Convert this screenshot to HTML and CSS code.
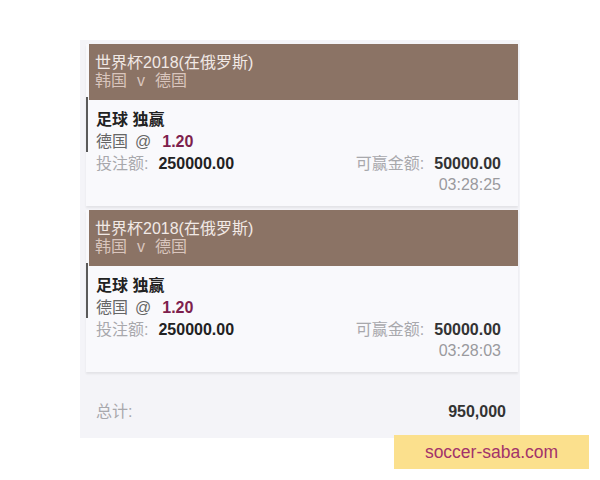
FILE: index.html
```html
<!DOCTYPE html>
<html lang="zh">
  <head>
    <meta charset="UTF-8" />
    <meta name="viewport" content="width=device-width, initial-scale=1.0" />
    <link rel="stylesheet" href="styles.css">
  </head>
  <body>
    <div class="slip">
      <div class="bet">
        <div class="bet-head">
          <div class="league">世界杯2018(在俄罗斯)</div>
          <div class="match">韩国<span class="vs">v</span>德国</div>
        </div>
        <div class="bet-body">
          <div class="market">足球 独赢</div>
          <div class="pick">德国<span class="at">@</span><span class="odds">1.20</span></div>
          <div class="amounts">
            <div><span class="label">投注额:</span><span class="value">250000.00</span></div>
            <div><span class="label">可赢金额:</span><span class="value">50000.00</span></div>
          </div>
          <div class="time">03:28:25</div>
        </div>
      </div>
      <div class="bet">
        <div class="bet-head">
          <div class="league">世界杯2018(在俄罗斯)</div>
          <div class="match">韩国<span class="vs">v</span>德国</div>
        </div>
        <div class="bet-body">
          <div class="market">足球 独赢</div>
          <div class="pick">德国<span class="at">@</span><span class="odds">1.20</span></div>
          <div class="amounts">
            <div><span class="label">投注额:</span><span class="value">250000.00</span></div>
            <div><span class="label">可赢金额:</span><span class="value">50000.00</span></div>
          </div>
          <div class="time">03:28:03</div>
        </div>
      </div>
      <div class="total">
        <span class="label">总计:</span>
        <span class="value">950,000</span>
      </div>
    </div>
    <div class="watermark">soccer-saba.com</div>
  </body>
</html>
```

FILE: styles.css
```css
body {
  margin: 0;
  background: #fff;
  font-family: "Liberation Sans", "Noto Sans CJK SC", sans-serif;
  font-size: 16px;
  color: #222;
}
.slip {
  margin: 40px 0 0 80px;
  width: 440px;
  height: 398px;
  box-sizing: border-box;
  padding: 4px 2px 0 6px;
  background: #f4f4f8;
}
.bet {
  height: 162px;
  margin-bottom: 4px;
  display: flex;
  flex-direction: column;
  background: #f9f9fc;
  box-shadow: 0 2px 2px rgba(0, 0, 0, 0.07);
}
.bet-head {
  margin-left: 3px;
  padding: 10px 6px;
  background: #8b7365;
  line-height: 18px;
}
.league {
  color: #f1e9e5;
}
.match {
  color: #d9c5bd;
}
.vs {
  margin: 0 10px;
}
.bet-body {
  position: relative;
  flex: 1;
  padding: 9px 17px 0 10px;
  line-height: 22px;
}
/* dark marker on the left edge of the bet */
.bet-body::before {
  content: "";
  position: absolute;
  left: 0;
  top: -3px;
  width: 2px;
  height: 55px;
  background: #5a5a5a;
}
.market {
  font-weight: bold;
}
.pick {
  color: #666;
}
.at {
  margin: 0 11px 0 7px;
}
.odds {
  color: #7e1f4d;
  font-weight: bold;
}
.amounts {
  display: flex;
  justify-content: space-between;
}
.label {
  color: #a8a8ac;
}
.value {
  margin-left: 10px;
  font-weight: bold;
  color: #222;
}
.amounts div:last-child .value {
  color: #333;
}
.time {
  text-align: right;
  color: #9a9a9e;
  line-height: 20px;
}
.total {
  display: flex;
  justify-content: space-between;
  margin-top: 29px;
  padding: 0 12px 0 10px;
  line-height: 22px;
}
.total .value {
  color: #333;
}
.watermark {
  position: absolute;
  left: 394px;
  top: 435px;
  width: 195px;
  height: 34px;
  line-height: 34px;
  text-align: center;
  background: #fbe08d;
  color: #a3336a;
  font-size: 17.5px;
}
```
